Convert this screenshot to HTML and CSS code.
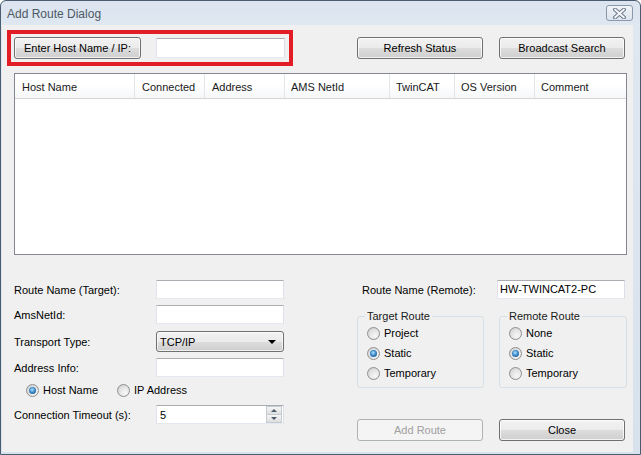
FILE: index.html
```html
<!DOCTYPE html>
<html>
<head>
<meta charset="utf-8">
<title>Add Route Dialog</title>
<link rel="stylesheet" href="styles.css">
</head>
<body>
<div class="window">
  <div class="titlebar">
    <span class="title">Add Route Dialog</span>
    <span class="close">
      <svg width="15" height="11" viewBox="0 0 15 11">
        <path d="M3 1.5 L12 9.5 M12 1.5 L3 9.5" stroke="#6f7d8c" stroke-width="4" stroke-linecap="round" fill="none"/>
        <path d="M3 1.5 L12 9.5 M12 1.5 L3 9.5" stroke="#f6f8fb" stroke-width="1.8" stroke-linecap="round" fill="none"/>
      </svg>
    </span>
  </div>
  <div class="client">
    <div class="toprow">
      <div class="highlight">
        <div class="btn host-btn">Enter Host Name / IP:</div>
        <div class="input host-input"></div>
      </div>
      <div class="btn refresh">Refresh Status</div>
      <div class="btn broadcast">Broadcast Search</div>
    </div>

    <div class="list">
      <div class="list-header">
        <div class="col w1">Host Name</div>
        <div class="col w2">Connected</div>
        <div class="col w3">Address</div>
        <div class="col w4">AMS NetId</div>
        <div class="col w5">TwinCAT</div>
        <div class="col w6">OS Version</div>
        <div class="col w7">Comment</div>
      </div>
    </div>

    <div class="lower">
      <div class="left">
        <div class="row r1">
          <span class="label">Route Name (Target):</span>
          <div class="input field"></div>
        </div>
        <div class="row r2">
          <span class="label">AmsNetId:</span>
          <div class="input field"></div>
        </div>
        <div class="row r3">
          <span class="label">Transport Type:</span>
          <div class="combo">
            <span class="combo-text">TCP/IP</span>
            <span class="combo-arrow"></span>
          </div>
        </div>
        <div class="row r4">
          <span class="label">Address Info:</span>
          <div class="input field"></div>
        </div>
        <div class="row r5 radios">
          <span class="opt opt-host"><span class="radio checked"></span>Host Name</span>
          <span class="opt"><span class="radio"></span>IP Address</span>
        </div>
        <div class="row r6">
          <span class="label">Connection Timeout (s):</span>
          <div class="input field spinfield">
            <span class="spin-text">5</span>
            <span class="spin">
              <span class="spin-btn"><span class="tri-up"></span></span>
              <span class="spin-btn"><span class="tri-down"></span></span>
            </span>
          </div>
        </div>
      </div>

      <div class="right">
        <div class="row r1">
          <span class="label rlabel">Route Name (Remote):</span>
          <div class="input field"><span class="value">HW-TWINCAT2-PC</span></div>
        </div>
        <div class="groups">
          <fieldset class="group g-target">
            <legend>Target Route</legend>
            <div class="gopt"><span class="radio"></span>Project</div>
            <div class="gopt"><span class="radio checked"></span>Static</div>
            <div class="gopt"><span class="radio"></span>Temporary</div>
          </fieldset>
          <fieldset class="group g-remote">
            <legend>Remote Route</legend>
            <div class="gopt"><span class="radio"></span>None</div>
            <div class="gopt"><span class="radio checked"></span>Static</div>
            <div class="gopt"><span class="radio"></span>Temporary</div>
          </fieldset>
        </div>
        <div class="actions">
          <div class="btn disabled add">Add Route</div>
          <div class="btn closebtn">Close</div>
        </div>
      </div>
    </div>
  </div>
</div>
</body>
</html>
```

FILE: styles.css
```css
* { box-sizing: border-box; }
html, body { margin: 0; padding: 0; }
body {
  width: 641px;
  height: 455px;
  overflow: hidden;
  background: #ffffff;
  font-family: "Liberation Sans", Arial, sans-serif;
  font-size: 11px;
  color: #000;
}

.window {
  width: 641px;
  height: 455px;
  border: 1px solid #4b5c70;
  border-radius: 6px 6px 0 0;
  background: linear-gradient(#dbe4ef, #dfe7f1 24px, #d8e2ed);
  display: flex;
  flex-direction: column;
}

.titlebar {
  height: 24px;
  flex: none;
  display: flex;
  align-items: center;
  justify-content: space-between;
  padding: 0 7px 0 6px;
}
.title {
  font-size: 12px;
  color: #4e5966;
  margin-top: 1px;
}
.close {
  width: 27px;
  height: 16px;
  border: 1px solid #8a98a9;
  border-radius: 3px;
  background: linear-gradient(#f1f4f8, #dce4ee);
  display: flex;
  align-items: center;
  justify-content: center;
}

.client {
  flex: 1;
  margin: 0 7px 2px 1px;
  background: #f0f0f0;
  display: flex;
  flex-direction: column;
}

/* buttons */
.btn {
  height: 22px;
  border: 1px solid #707070;
  border-radius: 3px;
  background: linear-gradient(#f2f2f2 0%, #ebebeb 50%, #dddddd 50%, #cfcfcf 100%);
  box-shadow: inset 0 0 0 1px rgba(255,255,255,0.75);
  display: flex;
  align-items: center;
  justify-content: center;
  color: #000;
}
.btn.disabled {
  border-color: #adb2b5;
  background: #f4f4f4;
  box-shadow: none;
  color: #a0a0a0;
}

.input {
  background: #fff;
  border: 1px solid;
  border-color: #abadb3 #dbdfe6 #e3e9ef #e2e3ea;
}

/* top row */
.toprow {
  margin-top: 5px;
  height: 36px;
  display: flex;
  align-items: center;
  flex: none;
}
.highlight {
  margin-left: 5px;
  width: 286px;
  height: 36px;
  border: 4px solid #e31d25;
  display: flex;
  align-items: center;
  padding-left: 3px;
}
.host-btn { width: 127px; }
.host-input { margin-left: 15px; width: 129px; height: 20px; }
.refresh { margin-left: 64px; width: 126px; }
.broadcast { margin-left: 16px; width: 126px; }

/* list */
.list {
  margin: 7px 0 0 12px;
  width: 613px;
  height: 182px;
  flex: none;
  border: 1px solid #828790;
  background: #fff;
}
.list-header {
  height: 25px;
  border-bottom: 1px solid #d5d5d5;
  background: linear-gradient(#ffffff 0%, #ffffff 45%, #f6f7f9 100%);
  display: flex;
}
.col {
  height: 24px;
  display: flex;
  align-items: center;
  padding-left: 6px;
  padding-top: 1px;
  border-right: 1px solid #e3e5e8;
  color: #1a1a1a;
}
.col.w1 { width: 120px; padding-left: 7px; }
.col.w2 { width: 70px; padding-left: 7px; }
.col.w3 { width: 80px; padding-left: 7px; }
.col.w4 { width: 105px; }
.col.w5 { width: 65px; }
.col.w6 { width: 80px; }
.col.w7 { flex: 1; border-right: none; }

/* lower */
.lower {
  margin-top: 25px;
  display: flex;
  flex: none;
}
.left {
  margin-left: 12px;
  width: 272px;
  display: flex;
  flex-direction: column;
}
.row {
  display: flex;
  align-items: center;
}
.label { width: 142px; flex: none; }
.field { width: 128px; height: 19px; }
.r1 { height: 19px; }
.r2 { height: 19px; margin-top: 6px; }
.r3 { height: 21px; margin-top: 7px; }
.r4 { height: 19px; margin-top: 6px; }
.r5 { height: 18px; margin-top: 4px; }
.r6 { height: 19px; margin-top: 6px; }

.combo {
  width: 128px;
  height: 21px;
  border: 1px solid #707070;
  border-radius: 3px;
  background: linear-gradient(#f2f2f2 0%, #ebebeb 50%, #dddddd 50%, #cfcfcf 100%);
  box-shadow: inset 0 0 0 1px rgba(255,255,255,0.7);
  display: flex;
  align-items: center;
  justify-content: space-between;
  padding: 0 7px 0 3px;
}
.combo-arrow {
  width: 0;
  height: 0;
  border-left: 4px solid transparent;
  border-right: 4px solid transparent;
  border-top: 4px solid #000;
  margin-top: 1px;
}

.radios { padding-left: 12px; }
.opt { display: flex; align-items: center; }
.opt-host { width: 91px; }

.radio {
  width: 13px;
  height: 13px;
  flex: none;
  border-radius: 50%;
  border: 1px solid #8f8f8f;
  background: radial-gradient(circle at 65% 70%, #f7f7f7 0%, #e6e6e6 45%, #c9c9c9 100%);
  margin-right: 4px;
  display: flex;
  align-items: center;
  justify-content: center;
}
.radio.checked::after {
  content: "";
  width: 7px;
  height: 7px;
  border-radius: 50%;
  background: radial-gradient(circle at 45% 40%, #b3e3fd 0%, #3d8ccc 45%, #0e3f74 100%);
}

.spinfield {
  display: flex;
  align-items: center;
  justify-content: space-between;
  padding: 0 1px 0 3px;
}
.spin {
  width: 16px;
  height: 17px;
  display: flex;
  flex-direction: column;
}
.spin-btn {
  flex: 1;
  border: 1px solid #c6cbd2;
  background: linear-gradient(#f6f6f6, #dedede);
  display: flex;
  align-items: center;
  justify-content: center;
}
.spin-btn + .spin-btn { border-top: none; }
.tri-up {
  width: 0; height: 0;
  border-left: 3px solid transparent;
  border-right: 3px solid transparent;
  border-bottom: 3px solid #4d5a6a;
}
.tri-down {
  width: 0; height: 0;
  border-left: 3px solid transparent;
  border-right: 3px solid transparent;
  border-top: 3px solid #4d5a6a;
}

/* right column */
.right {
  margin-left: 71px;
  width: 270px;
  display: flex;
  flex-direction: column;
}
.rlabel { width: 140px; padding-left: 5px; }
.value { padding-left: 2px; line-height: 17px; }

.groups {
  margin-top: 11px;
  display: flex;
  height: 78px;
}
.group {
  margin: 0;
  padding: 0 0 3px 9px;
  border: 1px solid #d5dfe5;
  border-radius: 3px;
  height: 78px;
  min-width: 0;
}
.g-target { width: 127px; }
.g-remote { width: 128px; margin-left: 15px; }
.group legend {
  padding: 0 2px;
  margin-left: -2px;
  line-height: 13px;
  color: #1a1a1a;
}
.gopt {
  height: 20px;
  display: flex;
  align-items: center;
}

.actions {
  margin-top: 31px;
  display: flex;
}
.add { width: 126px; height: 22px; }
.closebtn { width: 126px; height: 22px; margin-left: 16px; }
```
